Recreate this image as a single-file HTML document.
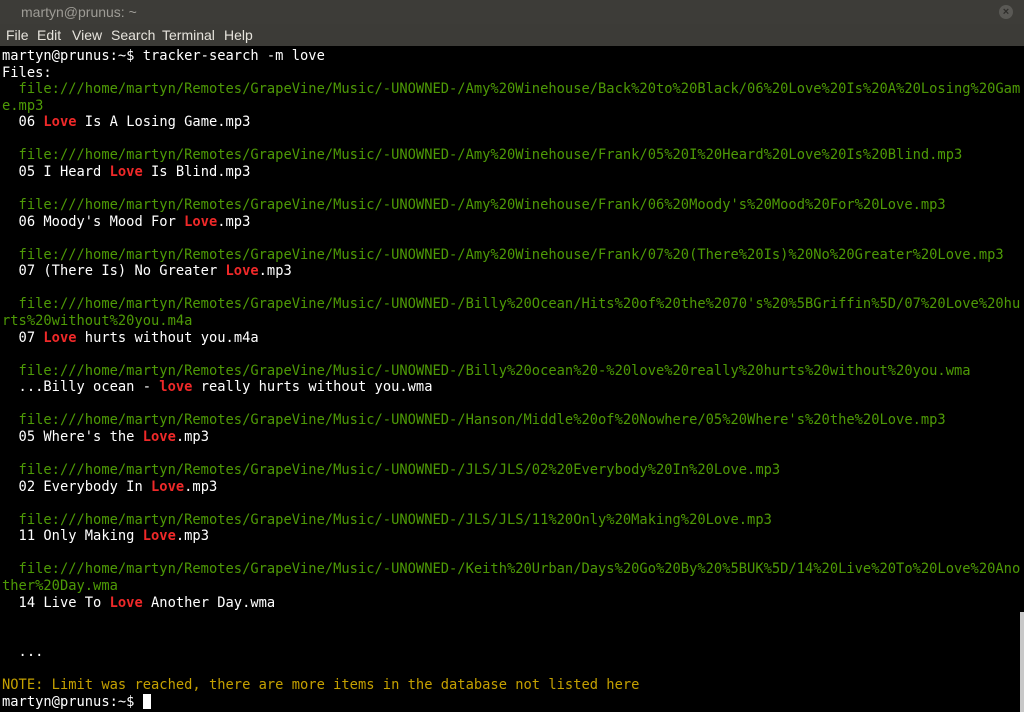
<!DOCTYPE html>
<html><head><meta charset="utf-8"><style>
html,body{margin:0;padding:0;width:1024px;height:712px;overflow:hidden;background:#000}
.title{position:absolute;left:0;top:0;width:1024px;height:24px;background:#3d3c38;color:#9e9c96;font:14px "Liberation Sans",sans-serif;}
.title span{position:absolute;left:21px;top:4px}
.close{position:absolute;left:999px;top:5px;width:14px;height:14px;border-radius:50%;background:#5a5955;color:#2e2d2a;font:bold 11px "Liberation Sans",sans-serif;text-align:center;line-height:14px}
.menu{position:absolute;left:0;top:24px;width:1024px;height:22px;background:#3c3b37;color:#e6e3dc;font:14px "Liberation Sans",sans-serif;}
.menu span{position:absolute;top:3px}
pre{position:absolute;left:2px;top:48px;margin:0;font:13.75px/16.56px "DejaVu Sans Mono","Liberation Mono",monospace;color:#fff;white-space:pre}
.g{color:#4e9a06}.r{color:#ef2929;font-weight:bold}.y{color:#c4a000}
.sb{position:absolute;left:1020px;top:612px;width:4px;height:100px;background:#c8c8c8}
.cur{display:inline-block;width:8px;height:15px;background:#fff;vertical-align:-3px}
</style></head><body>
<div class="title"><span>martyn@prunus: ~</span><div class="close">×</div></div>
<div class="menu"><span style="left:6px">File</span><span style="left:37px">Edit</span><span style="left:72px">View</span><span style="left:111px">Search</span><span style="left:162px">Terminal</span><span style="left:224px">Help</span></div>
<pre>martyn@prunus:~$ tracker-search -m love
Files:
<span class="g">  file:///home/martyn/Remotes/GrapeVine/Music/-UNOWNED-/Amy%20Winehouse/Back%20to%20Black/06%20Love%20Is%20A%20Losing%20Gam
e.mp3</span>
  06 <span class="r">Love</span> Is A Losing Game.mp3

<span class="g">  file:///home/martyn/Remotes/GrapeVine/Music/-UNOWNED-/Amy%20Winehouse/Frank/05%20I%20Heard%20Love%20Is%20Blind.mp3</span>
  05 I Heard <span class="r">Love</span> Is Blind.mp3

<span class="g">  file:///home/martyn/Remotes/GrapeVine/Music/-UNOWNED-/Amy%20Winehouse/Frank/06%20Moody's%20Mood%20For%20Love.mp3</span>
  06 Moody's Mood For <span class="r">Love</span>.mp3

<span class="g">  file:///home/martyn/Remotes/GrapeVine/Music/-UNOWNED-/Amy%20Winehouse/Frank/07%20(There%20Is)%20No%20Greater%20Love.mp3</span>
  07 (There Is) No Greater <span class="r">Love</span>.mp3

<span class="g">  file:///home/martyn/Remotes/GrapeVine/Music/-UNOWNED-/Billy%20Ocean/Hits%20of%20the%2070's%20%5BGriffin%5D/07%20Love%20hu
rts%20without%20you.m4a</span>
  07 <span class="r">Love</span> hurts without you.m4a

<span class="g">  file:///home/martyn/Remotes/GrapeVine/Music/-UNOWNED-/Billy%20ocean%20-%20love%20really%20hurts%20without%20you.wma</span>
  ...Billy ocean - <span class="r">love</span> really hurts without you.wma

<span class="g">  file:///home/martyn/Remotes/GrapeVine/Music/-UNOWNED-/Hanson/Middle%20of%20Nowhere/05%20Where's%20the%20Love.mp3</span>
  05 Where's the <span class="r">Love</span>.mp3

<span class="g">  file:///home/martyn/Remotes/GrapeVine/Music/-UNOWNED-/JLS/JLS/02%20Everybody%20In%20Love.mp3</span>
  02 Everybody In <span class="r">Love</span>.mp3

<span class="g">  file:///home/martyn/Remotes/GrapeVine/Music/-UNOWNED-/JLS/JLS/11%20Only%20Making%20Love.mp3</span>
  11 Only Making <span class="r">Love</span>.mp3

<span class="g">  file:///home/martyn/Remotes/GrapeVine/Music/-UNOWNED-/Keith%20Urban/Days%20Go%20By%20%5BUK%5D/14%20Live%20To%20Love%20Ano
ther%20Day.wma</span>
  14 Live To <span class="r">Love</span> Another Day.wma


  ...

<span class="y">NOTE: Limit was reached, there are more items in the database not listed here</span>
martyn@prunus:~$ <span class="cur"></span></pre>
<div class="sb"></div>
</body></html>
